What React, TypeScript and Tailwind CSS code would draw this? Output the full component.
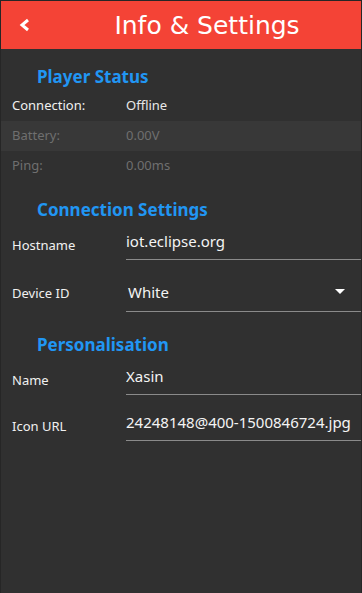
import React from "react";

function Row({ label, value, dim, shade }: { label: string; value: string; dim?: boolean; shade?: boolean }) {
  return (
    <div className={`flex items-center h-[30px] ${shade ? "bg-[#383838]" : ""}`}>
      <div className={`w-[125px] pl-[11px] text-[13px] ${dim ? "text-[#6f6f6f]" : "text-[#f0f0f0]"}`}>{label}</div>
      <div className={`text-[13px] ${dim ? "text-[#6f6f6f]" : "text-[#e8e8e8]"}`}>{value}</div>
    </div>
  );
}

function Field({
  label,
  value,
  dropdown,
  h,
}: {
  label: string;
  value: string;
  dropdown?: boolean;
  h: string;
}) {
  return (
    <div className={`flex items-end ${h}`}>
      <div className={`w-[125px] pl-[11px] text-[13px] text-[#f0f0f0] ${dropdown ? "pb-[9px]" : "pb-[5px]"}`}>{label}</div>
      <div className="flex-1 min-w-0 h-full flex flex-col justify-end">
        <div
          className={`flex items-center overflow-hidden whitespace-nowrap text-[15px] text-[#f4f4f4] ${
            dropdown ? "pl-[2px] pb-[8px]" : "pb-[7px]"
          }`}
        >
          <span className="flex-1">{value}</span>
          {dropdown && (
            <svg width="10" height="6" viewBox="0 0 10 6" className="mr-[16px]">
              <path d="M0 0 H10 L5 5 Z" fill="#ffffff" />
            </svg>
          )}
        </div>
        <div className="h-[1px] bg-[#8a8a8a]" />
      </div>
    </div>
  );
}

function Title({ children }: { children: React.ReactNode }) {
  return <div className="pl-[36px] text-[17px] font-bold text-[#2196f3] leading-none h-[17px]">{children}</div>;
}

export default function App() {
  return (
    <div
      className="w-[362px] h-[593px] bg-[#303030] border-x border-[#262626] flex flex-col overflow-hidden"
      style={{ fontFamily: '"Noto Sans", sans-serif' }}
    >
      <div className="h-[49px] border-t border-[#262626] bg-[#f44336] flex items-center relative shrink-0">
        <svg width="14" height="14" viewBox="0 0 14 14" className="absolute left-[17px] top-[17px]">
          <path d="M10 2 L4 7 L10 12" stroke="#fff" strokeWidth="3" fill="none" strokeLinejoin="miter" />
        </svg>
        <div
          className="w-full text-center pl-[52px] text-[25px] text-white leading-none"
          style={{ fontFamily: '"DejaVu Sans", sans-serif' }}
        >
          Info &amp; Settings
        </div>
      </div>
      <div className="pt-[19px]">
        <Title>Player Status</Title>
      </div>
      <div className="pt-[6px]">
        <Row label="Connection:" value="Offline" />
        <Row label="Battery:" value="0.00V" dim shade />
        <Row label="Ping:" value="0.00ms" dim />
      </div>
      <div className="pt-[20px]">
        <Title>Connection Settings</Title>
      </div>
      <Field label="Hostname" value="iot.eclipse.org" h="h-[42px]" />
      <Field label="Device ID" value="White" dropdown h="h-[52px]" />
      <div className="pt-[24px]">
        <Title>Personalisation</Title>
      </div>
      <Field label="Name" value="Xasin" h="h-[42px]" />
      <Field label="Icon URL" value="24248148@400-1500846724.jpg" h="h-[46px]" />
    </div>
  );
}
